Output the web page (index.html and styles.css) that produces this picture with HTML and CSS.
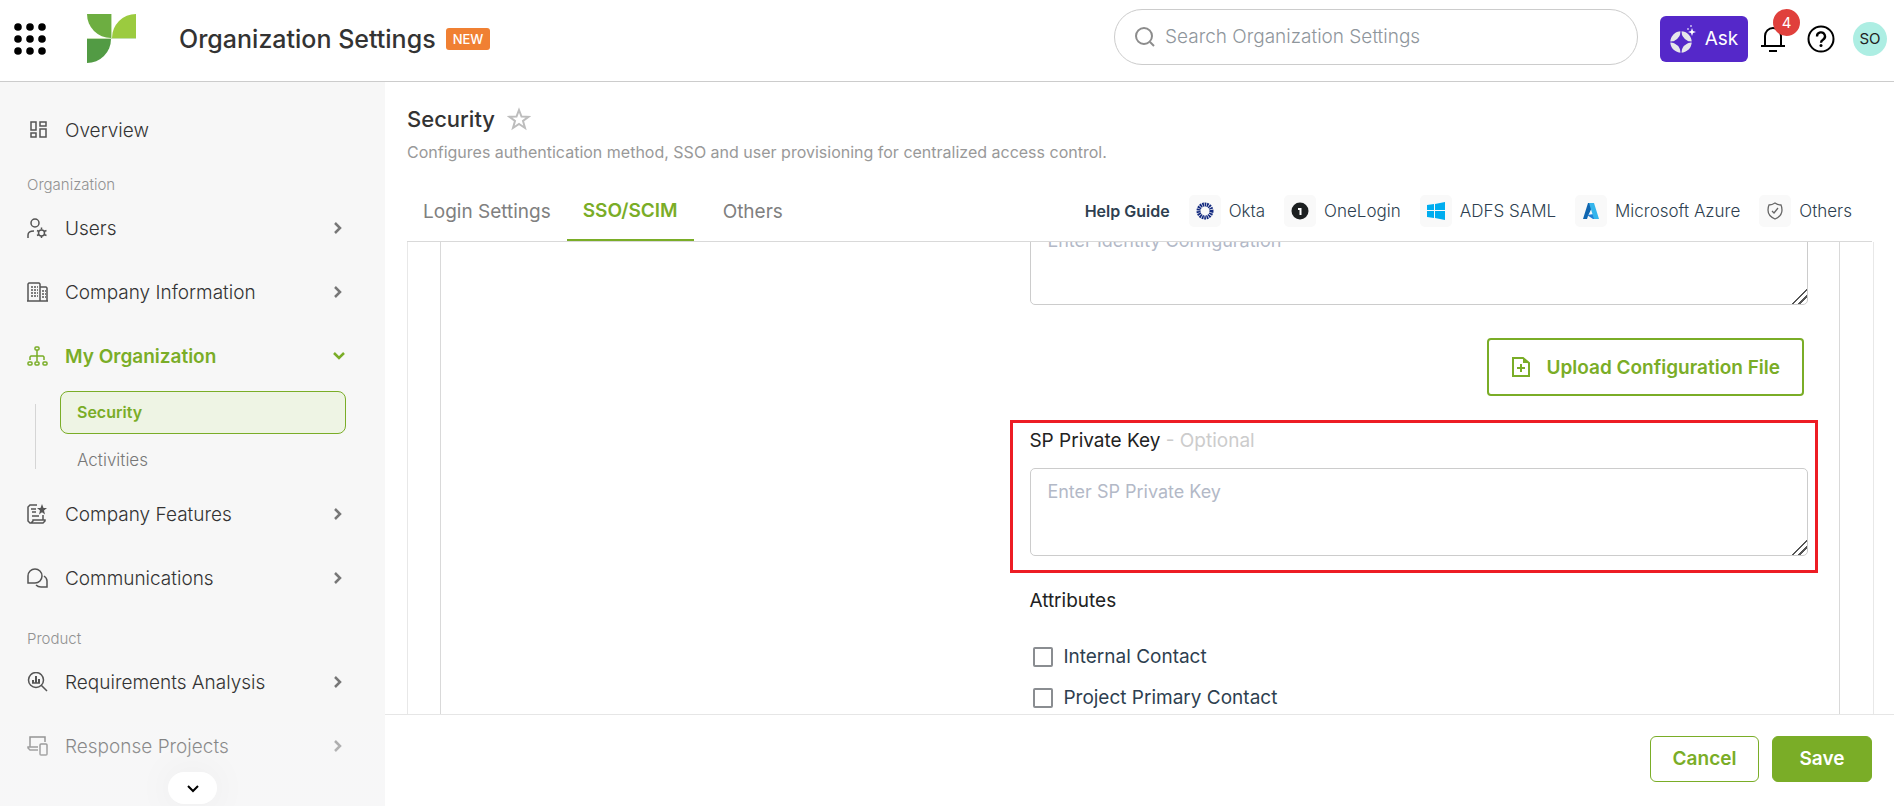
FILE: index.html
```html
<!DOCTYPE html>
<html lang="en">
<head>
  <meta charset="UTF-8" />
  <meta name="viewport" content="width=device-width, initial-scale=1.0" />
  <title>Organization Settings</title>
  <link rel="stylesheet" href="styles.css">
</head>
<body>
  <header class="topbar">
    <button class="icon-button apps" aria-label="Apps">
      <svg width="34" height="32" viewBox="0 0 34 32">
        <circle cx="5" cy="4" r="3.800"/><circle cx="17" cy="4" r="3.800"/><circle cx="29" cy="4" r="3.800"/>
        <circle cx="5" cy="16" r="3.800"/><circle cx="17" cy="16" r="3.800"/><circle cx="29" cy="16" r="3.800"/>
        <circle cx="5" cy="28" r="3.800"/><circle cx="17" cy="28" r="3.800"/><circle cx="29" cy="28" r="3.800"/>
      </svg>
    </button>
    <svg class="logo" width="49" height="49" viewBox="0 0 49 49">
      <path fill="#c3dfae" d="M24 0h1v25H0v-1h24zM25 24h24v1H25z"/>
      <path fill="#6dae41" d="M0 0h24v24A24 24 0 0 1 0 0z"/>
      <path fill="#9bcb3f" d="M49 0v24H25A24 24 0 0 1 49 0z"/>
      <path fill="#529b44" d="M0 25h24A24 24 0 0 1 0 49z"/>
    </svg>
    <h1>Organization Settings</h1>
    <span class="badge-new">NEW</span>

    <label class="search">
      <svg width="20" height="20" viewBox="0 0 20 20" fill="none" stroke="#8c8c8c" stroke-width="2">
        <circle cx="9" cy="9" r="8"/><path d="M15 15l4 4"/>
      </svg>
      <input type="text" placeholder="Search Organization Settings" aria-label="Search Organization Settings">
    </label>

    <button class="ask">
      <svg width="27" height="28" viewBox="0 0 27 28">
        <circle cx="11" cy="17" r="10.700" fill="#e6e6ea"/>
        <path fill="#5528c9" d="M11 7Q13 15 21 17Q13 19 11 27Q9 19 1 17Q9 15 11 7z"/>
        <path stroke="#5528c9" stroke-width="1.200" d="M11 5v4M11 25v4M-1 17h4M19 17h4"/>
        <path fill="#fff" d="M22 3l1 3 3 1-3 1-1 3-1-3-3-1 3-1z"/>
        <circle cx="18" cy="4" r="1" fill="#cbbdf0"/><circle cx="21" cy="1" r="1" fill="#cbbdf0"/>
      </svg>
      Ask
    </button>
    <button class="icon-button bell" aria-label="Notifications">
      <svg width="24" height="26" viewBox="0 0 24 26" fill="none" stroke="#000" stroke-width="2">
        <path d="M4 20V10a8 8 0 0 1 16 0v10M0 20h24M8 25h8"/>
      </svg>
      <span class="count">4</span>
    </button>
    <button class="icon-button help" aria-label="Help">
      <svg width="28" height="28" viewBox="0 0 28 28" fill="none" stroke="#000" stroke-width="2">
        <circle cx="14" cy="14" r="12.500"/>
        <path d="M10 11.500a4 4 0 1 1 6 3.300c-1.500 1-2 1.500-2 3" stroke-width="2.300"/>
        <circle cx="14" cy="20.500" r="1.500" fill="#000" stroke="none"/>
      </svg>
    </button>
    <button class="avatar">SO</button>
  </header>

  <div class="layout">
    <nav class="sidebar">
      <a class="nav-item single" href="#">
        <svg width="20" height="20" viewBox="0 0 20 20">
          <path d="M3 2h5v8H3zM12 2h6v4h-6zM3 13h5v4H3zM12 9h6v8h-6z"/>
        </svg>
        Overview
      </a>

      <div class="nav-label">Organization</div>
      <a class="nav-item" href="#">
        <svg width="21" height="20" viewBox="0 0 21 20">
          <circle cx="8" cy="5" r="4"/><path d="M1 20v-3c0-3 2-4 6-4"/>
          <path d="M14.500 9.500v2M14.500 18v2.500M10 12.500l2 1M17 16.500l2.500 1M10 17.500l2-1M17 13.500l2.500-1"/><circle cx="14.500" cy="15" r="3"/>
        </svg>
        Users
        <svg class="chevron" width="8" height="12" viewBox="0 0 8 12"><path d="M1 1l5 5-5 5"/></svg>
      </a>
      <a class="nav-item" href="#">
        <svg width="21" height="20" viewBox="0 0 21 20">
          <path d="M1 19V2l1-1h10l1 1v17M13 5h6l1 1v13M0 19h21"/>
          <path stroke-dasharray="2 1" d="M4 5h7M4 8h7M4 11h7M4 14h7M15 9h4M15 12h4M15 15h4"/>
        </svg>
        Company Information
        <svg class="chevron" width="8" height="12" viewBox="0 0 8 12"><path d="M1 1l5 5-5 5"/></svg>
      </a>
      <a class="nav-item active" href="#">
        <svg width="21" height="20" viewBox="0 0 21 20">
          <rect x="8" y="1" width="4" height="3" rx="1"/><path d="M10 4v11M3 14v-3l1-1h12l1 1v3"/>
          <rect x="1" y="16" width="4" height="3" rx="1"/><rect x="8" y="16" width="4" height="3" rx="1"/><rect x="16" y="16" width="4" height="3" rx="1"/>
        </svg>
        My Organization
        <svg class="chevron" width="12" height="8" viewBox="0 0 12 8"><path d="M1 1l5 5 5-5"/></svg>
      </a>
      <div class="submenu">
        <a class="selected" href="#">Security</a>
        <a href="#">Activities</a>
      </div>
      <a class="nav-item" href="#">
        <svg width="21" height="20" viewBox="0 0 21 20">
          <path d="M10 1H3L1 3v14l2 2h13l2-2v-1H6v1l-2 2M16 11v5M4 5h5M5 8h4M5 12h7"/>
          <path class="solid" d="M15 0l1.500 4H20l-3 2.500 1 4-3-2.300-3 2.300 1-4L10 4h3.500z"/>
        </svg>
        Company Features
        <svg class="chevron" width="8" height="12" viewBox="0 0 8 12"><path d="M1 1l5 5-5 5"/></svg>
      </a>
      <a class="nav-item" href="#">
        <svg width="21" height="20" viewBox="0 0 21 20">
          <path d="M1 15V8a7 7 0 1 1 7 7zM17 8q3 2 3 5v6h-6q-3 0-5-2"/>
        </svg>
        Communications
        <svg class="chevron" width="8" height="12" viewBox="0 0 8 12"><path d="M1 1l5 5-5 5"/></svg>
      </a>

      <div class="nav-label">Product</div>
      <a class="nav-item" href="#">
        <svg width="21" height="20" viewBox="0 0 21 20">
          <circle cx="9" cy="8" r="7.500"/><path d="M14 13l6 6M5 11h8"/><path stroke-width="2" d="M6 11V8M9 11V4M12 11V7"/>
        </svg>
        Requirements Analysis
        <svg class="chevron" width="8" height="12" viewBox="0 0 8 12"><path d="M1 1l5 5-5 5"/></svg>
      </a>
      <a class="nav-item" href="#">
        <svg width="21" height="20" viewBox="0 0 21 20">
          <path d="M3 11V1h15v5M11 11H1v1l2 2h8"/><rect x="13" y="8" width="7" height="11" rx="1"/>
        </svg>
        Response Projects
        <svg class="chevron" width="8" height="12" viewBox="0 0 8 12"><path d="M1 1l5 5-5 5"/></svg>
      </a>
      <div class="fade">
        <button class="more" aria-label="Show more">
          <svg width="12" height="8" viewBox="0 0 12 8" fill="none" stroke="#000" stroke-width="2"><path d="M1 1l5 5 5-5"/></svg>
        </button>
      </div>
    </nav>

    <main class="content">
      <div class="page-head">
        <div class="page-title">
          <h2>Security</h2>
          <svg width="24" height="24" viewBox="0 0 24 24" fill="none" stroke="#bdbdbd" stroke-width="2">
            <path d="M12 3l2.500 6.500 7 .300-5.500 4.200 2 7-6-4-6 4 2-7-5.500-4.200 7-.300z"/>
          </svg>
        </div>
        <p>Configures authentication method, SSO and user provisioning for centralized access control.</p>
      </div>

      <div class="tab-row">
        <div class="tabs">
          <a href="#">Login Settings</a>
          <a class="current" href="#">SSO/SCIM</a>
          <a href="#">Others</a>
        </div>
        <div class="guides">
          <strong>Help Guide</strong>
          <a href="#">
            <span class="tile"><svg width="18" height="18" viewBox="0 0 18 18"><circle cx="9" cy="9" r="6.500" fill="none" stroke="#12297f" stroke-width="4" stroke-dasharray="1.600 .669"/></svg></span>
            Okta
          </a>
          <a href="#">
            <span class="tile"><svg width="18" height="18" viewBox="0 0 18 18"><circle cx="9" cy="9" r="8.500" fill="#1c1f20"/><path d="M7 7h2.500v6" fill="none" stroke="#fff" stroke-width="2"/></svg></span>
            OneLogin
          </a>
          <a href="#">
            <span class="tile"><svg width="18" height="18" viewBox="0 0 18 18" fill="#00adef"><path d="M0 3l7-1v6H0zM8 2l10-2v8H8zM0 9h7v7l-7-1zM8 9h10v9L8 16z"/></svg></span>
            ADFS SAML
          </a>
          <a href="#">
            <span class="tile"><svg width="18" height="18" viewBox="0 0 18 18"><path d="M6 1h6L6 14l-1 3H1z" fill="#1066b0"/><path d="M9 6l3 6-7 1 6 4h4z" fill="#2080d8"/><path d="M7 1h5l5 16h-5z" fill="#35b5ec"/></svg></span>
            Microsoft Azure
          </a>
          <a href="#">
            <span class="tile"><svg width="18" height="18" viewBox="0 0 18 18" fill="none" stroke="#666" stroke-width="1.300"><path d="M9 1q3 2 6 2 1 2 1 5 0 6-7 9-7-3-7-9 0-3 1-5 3 0 6-2zM6 9l2 2 4-5"/></svg></span>
            Others
          </a>
        </div>
      </div>

      <div class="scroller" id="scroller">
        <div class="panel">
          <div class="panel-inner">
            <form class="fields" id="sso-form">
              <textarea placeholder="Enter Identity Configuration" aria-label="Identity Configuration"></textarea>
              <button type="button" class="upload">
                <svg width="20" height="22" viewBox="0 0 20 22" fill="none" stroke="#7aad27" stroke-width="2">
                  <path d="M2 2h10l6 5v13H2zM10 8v8M6 12h8"/><path d="M12 2v5h6z" fill="#7aad27" stroke="none"/>
                </svg>
                Upload Configuration File
              </button>
              <div class="highlight">
                <label for="private-key">SP Private Key <span>- Optional</span></label>
                <textarea id="private-key" placeholder="Enter SP Private Key"></textarea>
              </div>
              <fieldset>
                <legend>Attributes</legend>
                <label class="check"><input type="checkbox"> Internal Contact</label>
                <label class="check"><input type="checkbox"> Project Primary Contact</label>
              </fieldset>
            </form>
          </div>
        </div>
      </div>

      <footer class="actions">
        <button class="cancel">Cancel</button>
        <button class="save">Save</button>
      </footer>
    </main>
  </div>

  <script>
    // open at the identity configuration fields
    document.getElementById("scroller").scrollTop = 63;
  </script>
</body>
</html>
```
FILE: styles.css
```css
* { box-sizing: border-box; }
body {
  font-family: Inter, "Liberation Sans", sans-serif;
  font-size: 19px;
  color: #333;
  margin: 0;
  height: 100vh;
  display: flex;
  flex-direction: column;
  overflow: hidden;
}
a {
  color: inherit;
  text-decoration: none;
}
button, input, textarea {
  font-family: inherit;
  font-size: inherit;
}
button {
  cursor: pointer;
  padding: 0;
}
h1, h2, p { margin: 0; }
svg { flex: none; }

/* top bar */
.topbar {
  height: 82px;
  flex: none;
  display: flex;
  align-items: center;
  padding: 0 7px 4px 13px;
  border-bottom: 1px solid #ccc;
  background: #fff;
}
.icon-button {
  border: none;
  background: none;
  display: flex;
  position: relative;
}
.logo { margin: 0 43px 0 40px; }
.topbar h1 {
  font-size: 25px;
  font-weight: 500;
}
.badge-new {
  margin-left: 10px;
  padding: 0 7px;
  border-radius: 3px;
  background: #f08033;
  color: #fff;
  font-size: 13px;
  font-weight: 500;
  line-height: 22px;
}
.search {
  width: 524px;
  height: 56px;
  margin: 0 22px 4px auto;
  padding: 0 20px;
  display: flex;
  align-items: center;
  gap: 8px;
  border: 1px solid #ccc;
  border-radius: 28px;
}
.search input {
  flex: 1;
  border: none;
  outline: none;
  font-weight: 300;
}
.search input::placeholder { color: #8f969c; }
.ask {
  width: 88px;
  height: 46px;
  display: flex;
  align-items: center;
  justify-content: center;
  gap: 8px;
  border: none;
  border-radius: 6px;
  background: #5528c9;
  color: #fff;
}
.bell { margin: 0 22px 0 13px; }
.count {
  position: absolute;
  top: -17px;
  left: 12px;
  width: 27px;
  border-radius: 50%;
  background: #e0403c;
  color: #fff;
  font-size: 15px;
  line-height: 27px;
}
.avatar {
  width: 34px;
  height: 34px;
  margin-left: 18px;
  border: none;
  border-radius: 50%;
  background: #adeee3;
  color: #222;
  font-size: 15px;
}

.layout {
  flex: 1;
  min-height: 0;
  display: flex;
}

/* sidebar */
.sidebar {
  width: 385px;
  flex: none;
  position: relative;
  overflow: hidden;
  padding-top: 22px;
  background: #f7f7f7;
}
.nav-item {
  height: 64px;
  padding: 0 43px 0 27px;
  display: flex;
  align-items: center;
  gap: 17px;
  font-weight: 300;
}
.nav-item.single {
  height: 52px;
  padding-left: 28px;
}
.nav-item svg {
  fill: none;
  stroke: #555;
  stroke-width: 1.500;
}
.nav-item .solid {
  fill: #555;
  stroke: none;
}
.nav-item .chevron {
  margin-left: auto;
  stroke: #777;
  stroke-width: 2.500;
}
.nav-item.active {
  padding-right: 40px;
  color: #7aad27;
  font-weight: 600;
}
.nav-item.active svg { stroke: #7aad27; }
.nav-label {
  padding: 19px 27px 1px;
  color: #929292;
  font-size: 15px;
  font-weight: 300;
  line-height: 20px;
}
.submenu {
  position: relative;
  display: flex;
  flex-direction: column;
  gap: 5px;
  padding: 3px 39px 0 60px;
  font-size: 17px;
}
.submenu::before {
  content: "";
  position: absolute;
  left: 35px;
  top: 16px;
  bottom: 13px;
  border-left: 1px solid #d5d5d5;
}
.submenu a {
  padding: 0 16px;
  border: 1px solid transparent;
  border-radius: 8px;
  color: #777;
  font-weight: 300;
  line-height: 41px;
}
.submenu .selected {
  border-color: #7aad27;
  background: #eef4e4;
  color: #7aad27;
  font-size: 16px;
  font-weight: 600;
}
.fade {
  position: absolute;
  left: 0;
  right: 0;
  bottom: 0;
  height: 84px;
  display: flex;
  align-items: flex-end;
  justify-content: center;
  padding-bottom: 2px;
  background: linear-gradient(rgba(247, 247, 248, 0.300), rgba(247, 247, 248, 0.800));
}
.more {
  width: 49px;
  height: 32px;
  border: none;
  border-radius: 16px;
  background: #fff;
  box-shadow: 0 0 40px rgba(0, 0, 0, 0.060);
}
.more svg { vertical-align: middle; }

/* main column */
.content {
  flex: 1;
  min-width: 0;
  display: flex;
  flex-direction: column;
}
.page-head { padding: 22px 22px 0; }
.page-title {
  display: flex;
  align-items: center;
  gap: 12px;
  height: 30px;
}
.page-title h2 {
  font-size: 22px;
  font-weight: 500;
}
.page-head p {
  padding-top: 8px;
  color: #999;
  font-size: 16px;
  line-height: 20px;
}
.tab-row {
  height: 60px;
  margin: 20px 22px 0;
  flex: none;
  display: flex;
  justify-content: space-between;
  border-bottom: 1px solid #d9d9d9;
}
.tabs { display: flex; }
.tabs a {
  padding: 0 16px;
  margin-right: 13px;
  color: #808080;
  line-height: 59px;
}
.tabs a:first-child { margin-right: 0; }
.tabs .current {
  border-bottom: 2px solid #7aad27;
  color: #7aad27;
  font-weight: 600;
  line-height: 57px;
}
.guides {
  display: flex;
  align-items: center;
  gap: 19px;
  padding: 0 20px 1px 0;
  color: #2e3f50;
  font-size: 17px;
}
.guides strong {
  font-size: 16px;
  font-weight: 600;
}
.guides a {
  display: flex;
  align-items: center;
  gap: 8px;
  font-weight: 300;
}
.tile {
  width: 32px;
  height: 32px;
  display: flex;
  align-items: center;
  justify-content: center;
  border-radius: 5px;
  background: #f9f9f9;
}
.scroller {
  flex: 1;
  min-height: 0;
  overflow-y: auto;
  scrollbar-width: none;
  padding: 0 20px 0 22px;
}
.panel {
  padding: 0 33px 0 32px;
  border: solid #e8e8e8;
  border-width: 0 1px;
}
.panel-inner {
  display: flex;
  justify-content: flex-end;
  padding: 38px 21px 60px;
  border: solid #d9d9d9;
  border-width: 0 1px;
}
.fields {
  width: calc(60% - 6px);
  display: flex;
  flex-direction: column;
}
.fields textarea {
  display: block;
  height: 88px;
  margin: 0 10px 0 20px;
  padding: 12px 16px;
  border: 1px solid #ccc;
  border-radius: 5px;
  font-size: 18px;
  resize: vertical;
}
.fields textarea::placeholder { color: #b3b9c7; }
/* two-stroke grip in the corner of the text boxes */
.fields textarea::-webkit-resizer {
  background: linear-gradient(135deg, transparent 48%, #555 48% 55%, transparent 55% 70%, #555 70% 77%, transparent 77%);
}
.upload {
  align-self: flex-end;
  height: 58px;
  margin: 33px 14px 24px 0;
  padding: 0 22px;
  display: flex;
  align-items: center;
  gap: 15px;
  border: 2px solid #7aad27;
  border-radius: 4px;
  background: #fff;
  color: #7aad27;
  font-weight: 600;
}
.highlight {
  padding: 6px 0 14px;
  border: 3px solid #ed1c24;
}
.highlight label {
  display: block;
  margin-bottom: 15px;
  padding-left: 16px;
  color: #222;
  line-height: 24px;
}
.highlight label span { color: #ccc; }
.highlight textarea {
  width: calc(100% - 24px);
  margin: 0 7px 0 17px;
}
fieldset {
  margin: 0;
  padding: 0 19px;
  border: none;
}
legend {
  padding: 16px 0 23px;
  color: #222;
  line-height: 24px;
}
.check {
  display: flex;
  align-items: center;
  gap: 10px;
  height: 41px;
  color: #2e3f50;
}
.check input {
  appearance: none;
  width: 20px;
  height: 20px;
  margin: 0 0 0 4px;
  border: 2px solid #8a8d91;
  border-radius: 2px;
}

.actions {
  height: 92px;
  flex: none;
  display: flex;
  justify-content: flex-end;
  align-items: center;
  gap: 13px;
  padding: 0 22px 4px;
  border-top: 1px solid #e6e6e6;
}
.actions button {
  height: 46px;
  border: 1px solid #7aad27;
  border-radius: 6px;
  font-weight: 600;
}
.cancel {
  width: 109px;
  background: #fff;
  color: #7aad27;
}
.save {
  width: 100px;
  background: #7aad27;
  color: #fff;
}
```
